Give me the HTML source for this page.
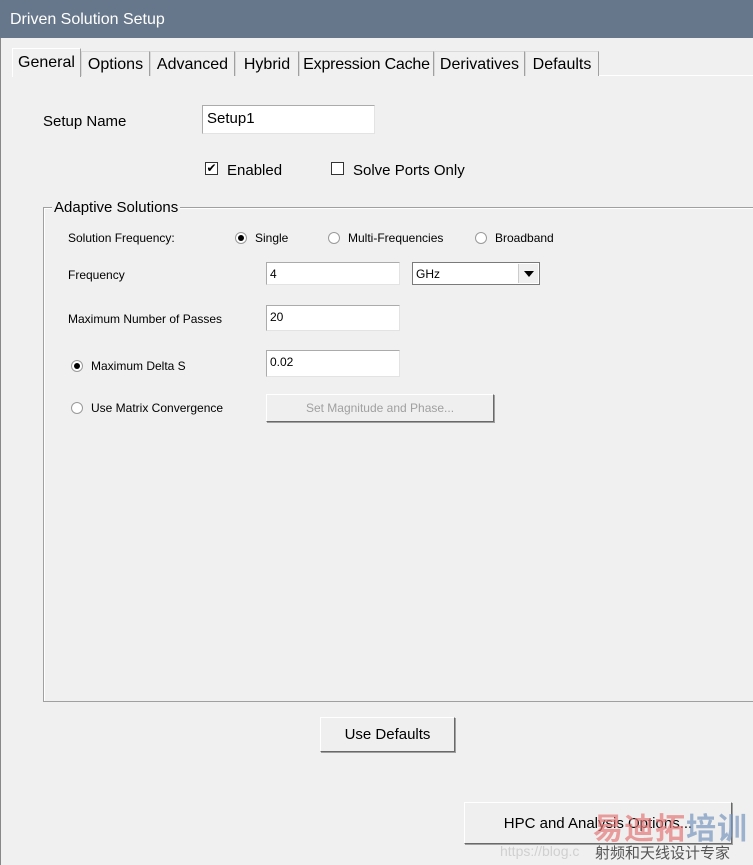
<!DOCTYPE html>
<html><head><style>
body{margin:0;width:753px;height:865px;overflow:hidden;background:#f0f0f0;font-family:"Liberation Sans","Noto Sans CJK SC",sans-serif;color:#000;position:relative}
.a{position:absolute;white-space:nowrap}
.title{left:0;top:0;width:753px;height:38px;background:#67778b;color:#fff;font-size:16px;line-height:40px}
.tab{top:51px;height:24px;border:1px solid #d9d9d9;border-bottom:none;border-right-color:#a0a0a0;font-size:16px;line-height:26px;text-align:center;background:#f0f0f0}
.inp{background:#fff;border:1px solid #ababab;border-right-color:#e3e3e3;border-bottom-color:#e3e3e3;box-sizing:border-box;font-size:12px;padding:4px 3px}
.s{font-size:12px}
.rad{width:10px;height:10px;border:1px solid #9a9a9a;border-radius:50%;background:#fff}
.rad.on::after{content:"";position:absolute;left:2px;top:2px;width:6px;height:6px;border-radius:50%;background:#000}
.btn{background:#efefef;border:1px solid #fff;border-right-color:#696969;border-bottom-color:#696969;box-shadow:1px 1px 0 #a0a0a0;box-sizing:border-box;text-align:center}
</style></head><body>
<div class="a title"><span style="margin-left:10px">Driven Solution Setup</span></div>
<div class="a" style="left:0;top:38px;width:1px;height:827px;background:#888"></div>
<div class="a" style="left:80px;top:75px;width:673px;height:1px;background:#fff"></div>
<div class="a tab" style="left:12px;top:48px;height:28px;width:67px;line-height:27px;border-color:#fff;border-right-color:#a0a0a0">General</div>
<div class="a tab" style="left:81px;width:67px">Options</div>
<div class="a tab" style="left:150px;width:83px">Advanced</div>
<div class="a tab" style="left:235px;width:62px">Hybrid</div>
<div class="a tab" style="left:299px;width:133px;letter-spacing:-0.2px">Expression Cache</div>
<div class="a tab" style="left:434px;width:89px">Derivatives</div>
<div class="a tab" style="left:525px;width:72px">Defaults</div>

<div class="a" style="left:43px;top:113px;font-size:15px">Setup Name</div>
<div class="a inp" style="left:202px;top:105px;width:173px;height:29px;font-size:15px;padding:4px 4px">Setup1</div>

<div class="a" style="left:205px;top:162px;width:13px;height:13px;border:1px solid #333;background:#fff;box-sizing:border-box;font-size:12px;line-height:11px;text-align:center">✔</div>
<div class="a" style="left:227px;top:162px;font-size:15px">Enabled</div>
<div class="a" style="left:331px;top:162px;width:13px;height:13px;border:1px solid #333;background:#fff;box-sizing:border-box"></div>
<div class="a" style="left:353px;top:162px;font-size:15px">Solve Ports Only</div>

<div class="a" style="left:43px;top:207px;width:720px;height:493px;border:1px solid #a0a0a0;box-shadow:inset 1px 1px 0 #fff"></div>
<div class="a" style="left:52px;top:199px;padding:0 2px;background:#f0f0f0;font-size:15px">Adaptive Solutions</div>

<div class="a s" style="left:68px;top:231px">Solution Frequency:</div>
<div class="a rad on" style="left:235px;top:232px"></div><div class="a s" style="left:255px;top:231px">Single</div>
<div class="a rad" style="left:328px;top:232px"></div><div class="a s" style="left:348px;top:231px">Multi-Frequencies</div>
<div class="a rad" style="left:475px;top:232px"></div><div class="a s" style="left:495px;top:231px">Broadband</div>

<div class="a s" style="left:68px;top:268px">Frequency</div>
<div class="a inp" style="left:266px;top:262px;width:134px;height:23px">4</div>
<div class="a inp" style="left:412px;top:262px;width:128px;height:23px;border:1px solid #7a7a7a">GHz</div>
<div class="a" style="left:518px;top:264px;width:19px;height:19px;background:#f0f0f0;border-left:1px solid #ccc"><div class="a" style="left:5px;top:7px;width:0;height:0;border-left:5px solid transparent;border-right:5px solid transparent;border-top:6px solid #000"></div></div>

<div class="a s" style="left:68px;top:312px">Maximum Number of Passes</div>
<div class="a inp" style="left:266px;top:305px;width:134px;height:26px">20</div>

<div class="a rad on" style="left:71px;top:360px"></div>
<div class="a s" style="left:91px;top:359px">Maximum Delta S</div>
<div class="a inp" style="left:266px;top:350px;width:134px;height:27px">0.02</div>

<div class="a rad" style="left:71px;top:402px"></div>
<div class="a s" style="left:91px;top:401px">Use Matrix Convergence</div>
<div class="a btn s" style="left:266px;top:394px;width:228px;height:28px;line-height:26px;color:#a0a0a0">Set Magnitude and Phase...</div>

<div class="a btn" style="left:320px;top:717px;width:135px;height:35px;line-height:34px;font-size:15px">Use Defaults</div>
<div class="a btn" style="left:464px;top:802px;width:268px;height:42px;line-height:42px;font-size:15px">HPC and Analysis Options...</div>
<div class="a" style="left:593px;top:804px;font-size:30px;font-weight:bold;color:rgba(230,120,120,.7);letter-spacing:1px">易迪拓<span style="color:rgba(120,150,190,.7)">培训</span></div>
<div class="a" style="left:595px;top:842px;font-size:15px;color:#555">射频和天线设计专家</div>
<div class="a" style="left:500px;top:843px;font-size:14px;color:rgba(200,200,200,.8)">https://blog.c</div>
</body></html>
